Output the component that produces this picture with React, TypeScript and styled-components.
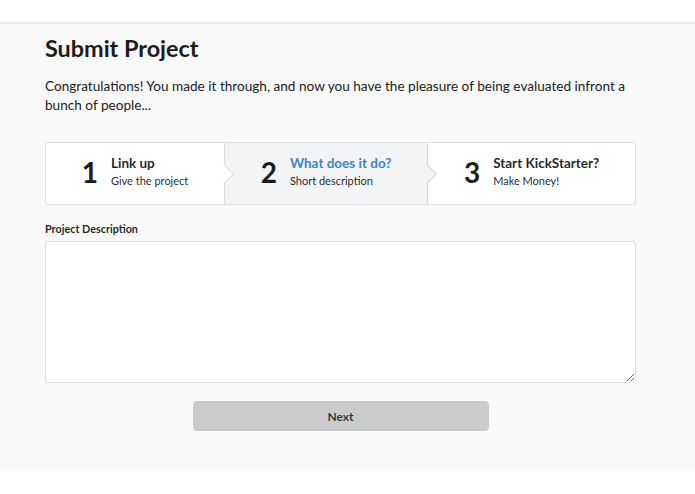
import React from "react";
import styled, { createGlobalStyle } from "styled-components";

const GlobalStyle = createGlobalStyle`
  html, body { margin: 0; padding: 0; background: #ffffff; }
  body { font-family: Lato, "Open Sans", "Liberation Sans", sans-serif; color: rgba(0,0,0,0.87); }
  * { box-sizing: border-box; }
`;

const TopBar = styled.header`
  height: 24px;
  background: #ffffff;
  border-bottom: 2px solid #e8e8e8;
`;

const Main = styled.main`
  background: #f9f9f9;
  padding: 10px 0 40px 45px;
`;

const Container = styled.div`
  width: 591px;
`;

const Heading = styled.h1`
  margin: 0;
  font-size: 23.4px;
  line-height: 1.2;
  font-weight: 700;
  color: #1b1c1d;
`;

const Intro = styled.p`
  margin: 15px 0 0;
  font-size: 13.6px;
  line-height: 19px;
  color: #222;
`;

const Steps = styled.div`
  display: flex;
  margin-top: 27px;
  background: #fff;
  border: 1px solid rgba(34, 36, 38, 0.15);
  border-radius: 4px;
`;

const Step = styled.div<{ $active?: boolean; $last?: boolean }>`
  position: relative;
  flex: 1 0 auto;
  display: flex;
  align-items: center;
  justify-content: center;
  height: 61px;
  padding: 0 28px;
  background: ${(p) => (p.$active ? "#f3f4f5" : "#ffffff")};
  border-right: ${(p) => (p.$last ? "none" : "1px solid rgba(34,36,38,0.15)")};
  &:first-child { border-radius: 4px 0 0 4px; }
  &:last-child { border-radius: 0 4px 4px 0; }
  &::after {
    display: ${(p) => (p.$last ? "none" : "block")};
    content: "";
    position: absolute;
    z-index: 2;
    top: 50%;
    right: 0;
    width: 13px;
    height: 13px;
    background: ${(p) => (p.$active ? "#f3f4f5" : "#ffffff")};
    border-style: solid;
    border-color: rgba(34, 36, 38, 0.15);
    border-width: 0 1px 1px 0;
    transform: translate(50%, -50%) rotate(-45deg);
  }
`;

const Number = styled.div`
  font-size: 28px;
  line-height: 1;
  font-weight: 700;
  color: #1b1c1d;
  margin: 0 13px 3px 0;
`;

const StepText = styled.div`
  display: flex;
  flex-direction: column;
  padding-bottom: 4px;
`;

const StepTitle = styled.div<{ $active?: boolean }>`
  font-size: 13.5px;
  line-height: 16px;
  font-weight: 700;
  color: ${(p) => (p.$active ? "#4183c4" : "rgba(0,0,0,0.87)")};
`;

const StepDesc = styled.div`
  margin-top: 2px;
  font-size: 11px;
  line-height: 16px;
  color: rgba(0, 0, 0, 0.87);
`;

const Field = styled.div`
  margin-top: 17px;
`;

const Label = styled.label`
  display: block;
  font-size: 10.8px;
  line-height: 14px;
  font-weight: 700;
  color: rgba(0, 0, 0, 0.87);
  margin-bottom: 5px;
`;

const TextArea = styled.textarea`
  display: block;
  width: 591px;
  height: 142px;
  margin: 0;
  padding: 10px 14px;
  border: 1px solid rgba(34, 36, 38, 0.15);
  border-radius: 4px;
  background: #fff;
  font-family: inherit;
  font-size: 14px;
  outline: none;
  resize: vertical;
`;

const ButtonRow = styled.div`
  display: flex;
  justify-content: center;
  margin-top: 18px;
`;

const Button = styled.button`
  width: 296px;
  height: 30px;
  border: none;
  border-radius: 4px;
  background: #cacbcd;
  color: rgba(0, 0, 0, 0.75);
  font-family: inherit;
  font-size: 12px;
  font-weight: 700;
  cursor: pointer;
`;

const steps = [
  { n: "1", title: "Link up", desc: "Give the project" },
  { n: "2", title: "What does it do?", desc: "Short description", active: true },
  { n: "3", title: "Start KickStarter?", desc: "Make Money!" },
];

export default function App() {
  return (
    <>
      <GlobalStyle />
      <TopBar />
      <Main>
        <Container>
          <Heading>Submit Project</Heading>
          <Intro>
            Congratulations! You made it through, and now you have the pleasure of being evaluated infront a
            bunch of people...
          </Intro>
          <Steps>
            {steps.map((s, i) => (
              <Step key={s.n} $active={s.active} $last={i === steps.length - 1}>
                <Number>{s.n}</Number>
                <StepText>
                  <StepTitle $active={s.active}>{s.title}</StepTitle>
                  <StepDesc>{s.desc}</StepDesc>
                </StepText>
              </Step>
            ))}
          </Steps>
          <Field>
            <Label>Project Description</Label>
            <TextArea />
          </Field>
          <ButtonRow>
            <Button>Next</Button>
          </ButtonRow>
        </Container>
      </Main>
    </>
  );
}
